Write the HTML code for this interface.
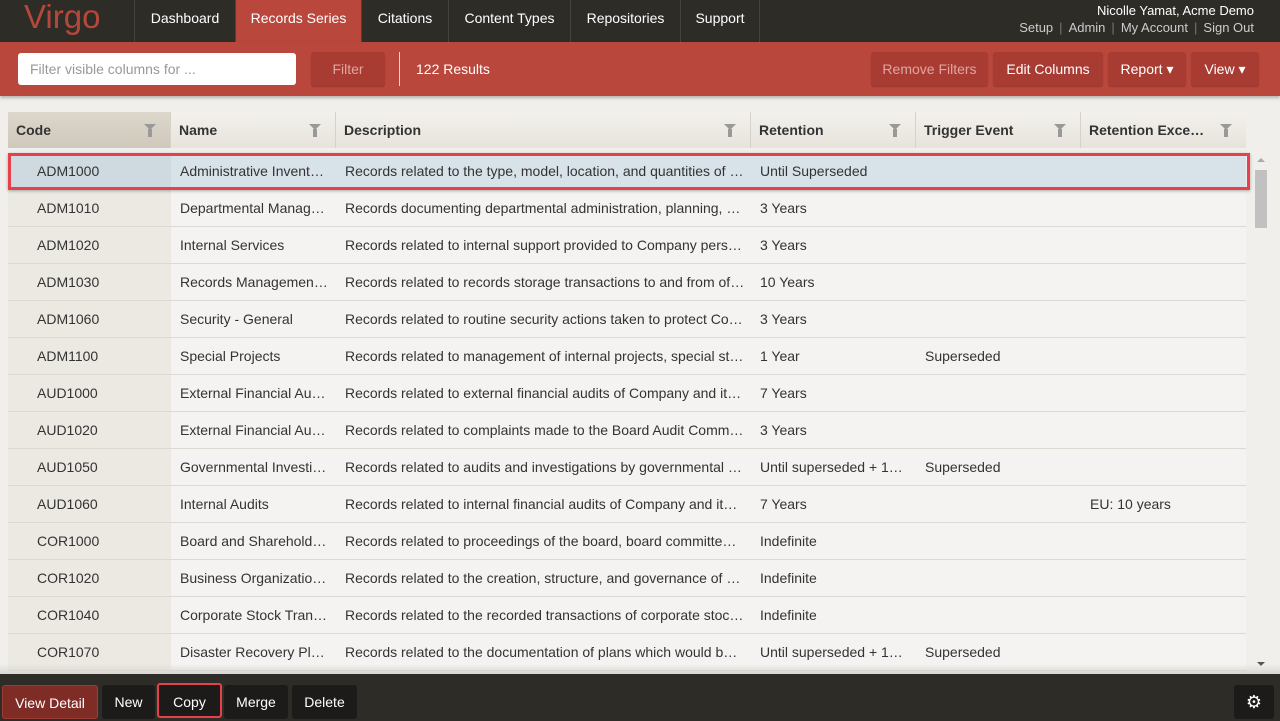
<!DOCTYPE html>
<html><head><meta charset="utf-8"><style>
*{box-sizing:border-box;margin:0;padding:0}
body{width:1280px;height:721px;overflow:hidden;background:#f1efeb;font-family:"Liberation Sans",Arial,sans-serif;font-size:14px;color:#333;position:relative}
.top{position:absolute;left:0;top:0;width:1280px;height:42px;background:#2e2c27}
.logo{position:absolute;left:24px;top:-2px;font-size:33px;color:#b5473b}
.nav{position:absolute;top:0;height:42px;border-left:1px solid #46433d;color:#fff;font-size:14px;line-height:36px;text-align:center}
.nav.act{background:#b9473c}
.user{position:absolute;right:26px;top:2px;color:#fff;font-size:13px;text-align:right;line-height:17px}
.user .l{color:#ccc}
.user .l span{color:#777;margin:0 6px}
.bar{position:absolute;left:0;top:42px;width:1280px;height:54px;background:#b9473c;box-shadow:0 2px 3px rgba(0,0,0,.25)}
.inp{position:absolute;left:18px;top:11px;width:278px;height:32px;background:#fff;border-radius:3px;color:#999;padding:8px 12px;font-size:14px}
.btn{position:absolute;top:10px;height:34px;border-radius:3px;background:#a83c32;color:#fff;line-height:34px;text-align:center;font-size:14px;box-shadow:0 1px 1px rgba(0,0,0,.2)}
.btn.dim{color:#e2a59e}
.tbl{position:absolute;left:8px;top:112px;width:1238px}
.hd{position:absolute;top:0;height:36px;background:linear-gradient(#f3f1ec,#e7e3dc);font-weight:bold;font-size:14px;line-height:36px;padding-left:8px;border-right:1px solid #d6d2c9}
.hd.c0{background:linear-gradient(#ddd7cc,#cfc8bb)}
.fil{position:absolute;right:14px;top:12px;width:0;height:0;border-left:6px solid transparent;border-right:6px solid transparent;border-top:6px solid #999}
.fil:after{content:"";position:absolute;left:-2px;top:-1px;width:4px;height:8px;background:#999}
.row{position:absolute;left:8px;width:1238px;height:37px;border-bottom:1px solid #dcd9d2;background:#f4f3f1}
.row .cd{position:absolute;left:0;top:0;width:163px;height:36px;background:#ece9e3}
.row div.t{position:absolute;top:0;line-height:36px;white-space:nowrap;font-size:14px}
.sel{background:#d8e2e9}
.sel .cd{background:#cfd9e0}
.bot{position:absolute;left:0;top:674px;width:1280px;height:47px;background:#2e2c27}
.bb{position:absolute;top:11px;height:34px;background:#1c1b19;color:#fff;line-height:34px;text-align:center;border-radius:3px;font-size:14px}
</style></head><body>
<div class="top">
<div class="logo">Virgo</div>
<div class="nav" style="left:134px;width:101px">Dashboard</div>
<div class="nav act" style="left:235px;width:126px">Records Series</div>
<div class="nav" style="left:361px;width:87px">Citations</div>
<div class="nav" style="left:448px;width:122px">Content Types</div>
<div class="nav" style="left:570px;width:110px">Repositories</div>
<div class="nav" style="left:680px;width:80px;border-right:1px solid #46433d">Support</div>
<div class="user">Nicolle Yamat, Acme Demo<div class="l">Setup<span>|</span>Admin<span>|</span>My Account<span>|</span>Sign Out</div></div>
</div>
<div class="bar">
<div class="inp">Filter visible columns for ...</div>
<div class="btn dim" style="left:311px;width:74px">Filter</div>
<div style="position:absolute;left:399px;top:10px;width:1px;height:34px;background:#f0d6d2"></div>
<div style="position:absolute;left:416px;top:19px;color:#fff">122 Results</div>
<div class="btn dim" style="left:871px;width:117px">Remove Filters</div>
<div class="btn" style="left:993px;width:110px">Edit Columns</div>
<div class="btn" style="left:1108px;width:78px">Report ▾</div>
<div class="btn" style="left:1191px;width:68px">View ▾</div>
</div>
<div class="tbl">
<div class="hd c0" style="left:0;width:163px">Code<i class="fil"></i></div>
<div class="hd" style="left:163px;width:165px">Name<i class="fil"></i></div>
<div class="hd" style="left:328px;width:415px">Description<i class="fil"></i></div>
<div class="hd" style="left:743px;width:165px">Retention<i class="fil"></i></div>
<div class="hd" style="left:908px;width:165px">Trigger Event<i class="fil"></i></div>
<div class="hd" style="left:1073px;width:165px;border-right:0">Retention Exce…<i class="fil"></i></div>
</div>
<div id="rows"></div>
<div style="position:absolute;left:8px;top:153px;width:1242px;height:37px;border:3px solid #e8404a;box-shadow:0 1px 3px rgba(0,0,0,.3)"></div>
<div style="position:absolute;left:1254px;top:153px;width:14px;height:518px;background:#f1efeb"></div>
<div style="position:absolute;left:1255px;top:170px;width:12px;height:58px;background:#c1c1c1"></div>
<div style="position:absolute;left:1257px;top:158px;border:4px solid transparent;border-bottom:4px solid #aaa;border-top:0"></div>
<div style="position:absolute;left:1257px;top:662px;border:4px solid transparent;border-top:4px solid #555;border-bottom:0"></div>
<div style="position:absolute;left:0;top:664px;width:1280px;height:10px;background:linear-gradient(rgba(241,239,235,0),#d9d7d2)"></div>
<div class="bot">
<div class="bb" style="left:2px;width:96px;top:11px;background:#7f2c26;border:1px solid #9b3b33">View Detail</div>
<div class="bb" style="left:102px;width:53px">New</div>
<div class="bb" style="left:157px;width:65px;top:9px;height:35px;border:2px solid #e8404a">Copy</div>
<div class="bb" style="left:224px;width:64px">Merge</div>
<div class="bb" style="left:292px;width:65px">Delete</div>
<div class="bb" style="left:1234px;width:40px;font-size:18px">⚙</div>
</div>
<script>
var d=[["ADM1000","Administrative Invent…","Records related to the type, model, location, and quantities of …","Until Superseded","",""],
["ADM1010","Departmental Manag…","Records documenting departmental administration, planning, …","3 Years","",""],
["ADM1020","Internal Services","Records related to internal support provided to Company pers…","3 Years","",""],
["ADM1030","Records Managemen…","Records related to records storage transactions to and from of…","10 Years","",""],
["ADM1060","Security - General","Records related to routine security actions taken to protect Co…","3 Years","",""],
["ADM1100","Special Projects","Records related to management of internal projects, special st…","1 Year","Superseded",""],
["AUD1000","External Financial Au…","Records related to external financial audits of Company and it…","7 Years","",""],
["AUD1020","External Financial Au…","Records related to complaints made to the Board Audit Comm…","3 Years","",""],
["AUD1050","Governmental Investi…","Records related to audits and investigations by governmental …","Until superseded + 1…","Superseded",""],
["AUD1060","Internal Audits","Records related to internal financial audits of Company and it…","7 Years","","EU: 10 years"],
["COR1000","Board and Sharehold…","Records related to proceedings of the board, board committe…","Indefinite","",""],
["COR1020","Business Organizatio…","Records related to the creation, structure, and governance of …","Indefinite","",""],
["COR1040","Corporate Stock Tran…","Records related to the recorded transactions of corporate stoc…","Indefinite","",""],
["COR1070","Disaster Recovery Pl…","Records related to the documentation of plans which would b…","Until superseded + 1…","Superseded",""]];
var xs=[29,172,337,752,917,1082],h="";
d.forEach(function(r,i){h+='<div class="row'+(i==0?' sel':'')+'" style="top:'+(153+i*37)+'px"><div class="cd"></div>';
r.forEach(function(c,j){h+='<div class="t" style="left:'+xs[j]+'px">'+c+'</div>'});h+='</div>'});
document.getElementById('rows').innerHTML=h;
</script>
</body></html>
